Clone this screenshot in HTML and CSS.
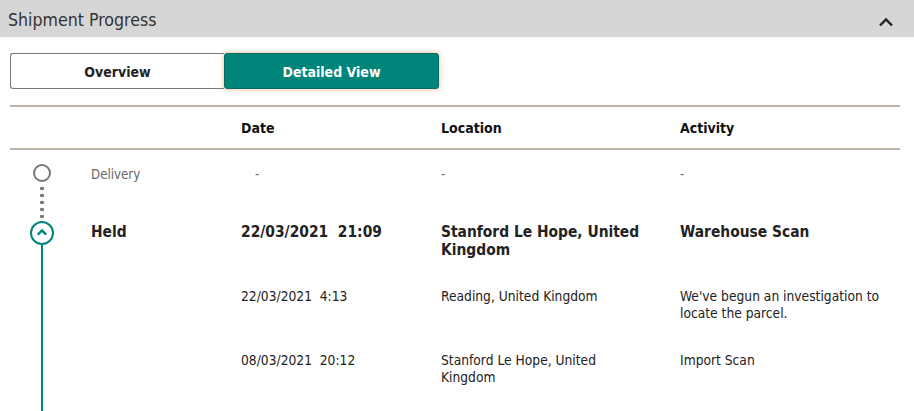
FILE: index.html
```html
<!DOCTYPE html>
<html lang="en">
<head>
<meta charset="utf-8">
<title>Shipment Progress</title>
<link rel="stylesheet" href="styles.css">
</head>
<body>
<section class="panel">
  <header class="panel-head">
    <h2 class="panel-title">Shipment Progress</h2>
    <svg class="chev" width="16" height="10" viewBox="0 0 16 10"><path d="M2 8.5 L8 2.5 L14 8.5" fill="none" stroke="#222" stroke-width="2.4"/></svg>
  </header>
  <div class="panel-body">
    <div class="toggle">
      <button class="tab">Overview</button>
      <button class="tab tab-active">Detailed View</button>
    </div>
    <div class="table">
      <div class="row row-head">
        <div class="c-tl"></div>
        <div class="c-status"></div>
        <div class="c-date">Date</div>
        <div class="c-loc">Location</div>
        <div class="c-act">Activity</div>
      </div>
      <div class="row row-pending">
        <div class="c-tl">
          <span class="dot-open"></span>
          <span class="seg seg-dotted"></span>
        </div>
        <div class="c-status">Delivery</div>
        <div class="c-date dash-date">-</div>
        <div class="c-loc">-</div>
        <div class="c-act">-</div>
      </div>
      <div class="row row-current">
        <div class="c-tl">
          <span class="dot-current"><svg width="12" height="8" viewBox="0 0 12 8"><path d="M1.8 6.6 L6 2.4 L10.2 6.6" fill="none" stroke="#00857a" stroke-width="2.5"/></svg></span>
          <span class="seg seg-solid"></span>
        </div>
        <div class="c-status">Held</div>
        <div class="c-date">22/03/2021&nbsp; 21:09</div>
        <div class="c-loc">Stanford Le Hope, United Kingdom</div>
        <div class="c-act">Warehouse Scan</div>
      </div>
      <div class="row row-event">
        <div class="c-tl"><span class="seg seg-solid"></span></div>
        <div class="c-status"></div>
        <div class="c-date">22/03/2021&nbsp; 4:13</div>
        <div class="c-loc">Reading, United Kingdom</div>
        <div class="c-act">We've begun an investigation to locate the parcel.</div>
      </div>
      <div class="row row-event">
        <div class="c-tl"><span class="seg seg-solid"></span></div>
        <div class="c-status"></div>
        <div class="c-date">08/03/2021&nbsp; 20:12</div>
        <div class="c-loc">Stanford Le Hope, United Kingdom</div>
        <div class="c-act">Import Scan</div>
      </div>
    </div>
  </div>
</section>
</body>
</html>
```

FILE: styles.css
```css
* { box-sizing: border-box; }
html, body { margin: 0; padding: 0; background: #fff; }
body {
  font-family: "DejaVu Sans Condensed", "DejaVu Sans", sans-serif;
  color: #222;
  font-size: 13.7px;
  overflow: hidden;
  height: 411px;
}
.panel-head {
  height: 37px;
  background: #d6d6d6;
  display: flex;
  align-items: center;
  justify-content: space-between;
  padding: 0 20px 0 8px;
}
.panel-title {
  margin: 0;
  font-weight: normal;
  font-size: 17.6px;
  color: #333;
  padding-top: 3px;
}
.chev { display: block; margin-top: 6px; }
.panel-body { padding: 16px 14px 0 10px; }
.toggle { display: flex; width: 429px; height: 36px; }
.tab {
  flex: 1;
  font: inherit;
  font-weight: bold;
  font-size: 14px;
  color: #222;
  background: #fff;
  border: 1px solid #777;
  border-right: none;
  border-radius: 3px 0 0 3px;
  padding: 1px 0 0;
  margin: 0;
}
.tab-active {
  background: #00857a;
  color: #fff;
  border: 1px solid #0a6d63;
  border-radius: 3px;
  box-shadow: 0 0 4px 1px rgba(226, 160, 100, 0.55);
}
.table {
  margin-top: 16px;
  border-top: 2px solid #bdb2a8;
}
.row { display: flex; }
.c-tl { width: 81px; flex: none; display: flex; flex-direction: column; align-items: center; padding-right: 18px; }
.c-status { width: 150px; flex: none; }
.c-date { width: 200px; flex: none; }
.c-loc { width: 239px; flex: none; padding-right: 32px; }
.c-act { flex: 1; padding-right: 10px; }
.row-head {
  height: 43px;
  align-items: center;
  font-weight: bold;
  font-size: 14px;
  color: #111;
  border-bottom: 2px solid #bdb2a8;
  padding-top: 1px;
}
.row-pending {
  height: 71px;
  color: #666;
  font-size: 13.2px;
  line-height: 17px;
}
.row-pending > div:not(.c-tl) { padding-top: 16px; }
.dash-date { padding-left: 14px; }
.row-pending .c-tl { padding-top: 14px; }
.dot-open {
  width: 18px; height: 18px;
  border: 2px solid #777;
  border-radius: 50%;
  flex: none;
}
.seg { flex: 1; width: 4px; }
.seg-dotted {
  margin-top: 3px;
  background-image: radial-gradient(circle, #777 1.7px, transparent 2.1px);
  background-size: 4px 7px;
  background-repeat: repeat-y;
  background-position: center 0;
}
.seg-solid { width: 2px; background: #00857a; }
.row-current {
  font-weight: bold;
  font-size: 15.4px;
  line-height: 18px;
  padding-bottom: 11px;
}
.row-current > div:not(.c-tl) { padding-top: 2px; }
.dot-current {
  width: 24px; height: 24px;
  border: 2px solid #00857a;
  border-radius: 50%;
  display: flex;
  align-items: center;
  justify-content: center;
  flex: none;
}
.dot-current svg { display: block; margin-top: -2px; }
.row-current .c-tl { margin-bottom: -11px; }
.row-event {
  font-size: 13.7px;
  line-height: 17px;
  padding-bottom: 12px;
}
.row-event .c-tl { margin-bottom: -12px; }
.row-event > div:not(.c-tl) { padding-top: 18px; }
.row-event:last-child { padding-bottom: 25px; }
.row-event:last-child .c-tl { margin-bottom: -25px; }
```
